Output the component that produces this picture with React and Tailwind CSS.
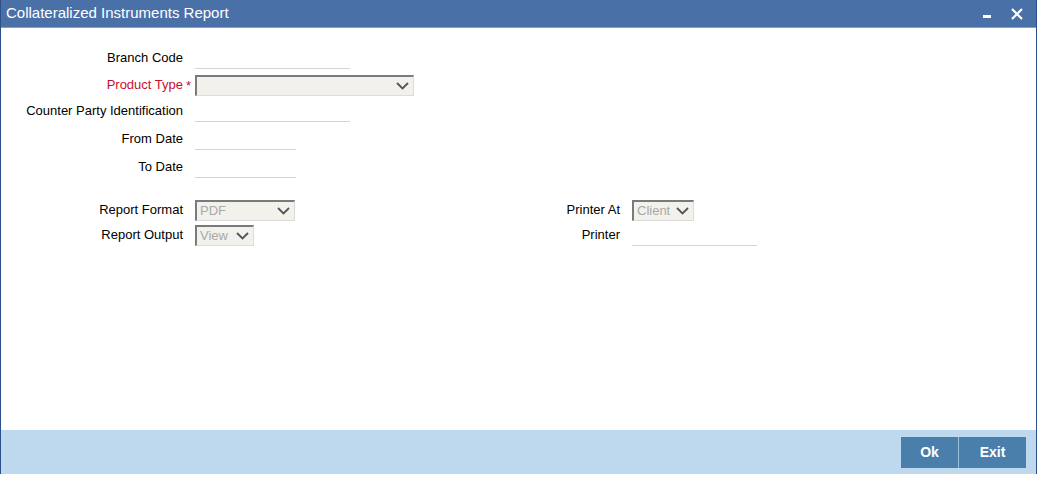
import React from 'react';

const Chevron = ({ className = '' }) => (
  <svg width="13" height="8" viewBox="0 0 13 8" className={className}>
    <path d="M1 1 L6.5 6.5 L12 1" fill="none" stroke="currentColor" strokeWidth="1.8" />
  </svg>
);

const Select = ({ width, value, disabled }) => (
  <div
    className={`${width} h-[21px] bg-[#f2f1ec] border-t-2 border-l-2 border-t-[#7a7a7a] border-l-[#7a7a7a] border-r border-b border-r-[#dcdcdc] border-b-[#dcdcdc] flex items-center justify-between pl-[3px] pr-[4px]`}
  >
    <span className={`text-[13px] ${disabled ? 'text-[#a9a9a9]' : 'text-black'}`}>{value}</span>
    <Chevron className="text-[#555]" />
  </div>
);

const TextField = ({ width }) => (
  <div className={`${width} h-[22px] border-b border-[#d4d4d4]`} />
);

const Row = ({ label, required, children, className = '', labelWidth = 'w-[182px]' }) => (
  <div className={`flex items-center h-[22px] ${className}`}>
    <div className={`${labelWidth} text-right text-[13px] ${required ? 'text-[#c8102e]' : 'text-black'}`}>
      {label}
    </div>
    <div className="w-[12px] text-[#c8102e] text-[13px] pl-[3px] leading-none">{required ? '*' : ''}</div>
    {children}
  </div>
);

export default function App() {
  return (
    <div className="w-[1038px] h-[483px] bg-white font-['Liberation_Sans',Arial,sans-serif] overflow-hidden">
      <div className="w-[1037px] h-[474px] flex flex-col border-l border-r border-[#2b4f88]">
        {/* Title bar */}
        <div className="h-[28px] bg-[#4a70a8] flex items-center justify-between pl-[5px] pr-[13px] border-b border-[#8ea3a8] shrink-0">
          <span className="text-white text-[15px]">Collateralized Instruments Report</span>
          <div className="flex items-center gap-[20px]">
            <div className="w-[8px] h-[3px] bg-white mt-[6px]" />
            <svg width="12" height="12" viewBox="0 0 12 12">
              <path d="M1 1 L11 11 M11 1 L1 11" stroke="white" strokeWidth="2.2" />
            </svg>
          </div>
        </div>

        {/* Body */}
        <div className="flex-1 bg-white pt-[19px]">
          <Row label="Branch Code">
            <TextField width="w-[155px]" />
          </Row>
          <Row label="Product Type" required className="mt-[5px]">
            <Select width="w-[219px]" value="" />
          </Row>
          <Row label="Counter Party Identification" className="mt-[4px]">
            <TextField width="w-[155px]" />
          </Row>
          <Row label="From Date" className="mt-[6px]">
            <TextField width="w-[101px]" />
          </Row>
          <Row label="To Date" className="mt-[6px]">
            <TextField width="w-[101px]" />
          </Row>

          <div className="flex mt-[21px]">
            <div className="flex flex-col gap-[3px] w-[437px]">
              <Row label="Report Format">
                <Select width="w-[100px]" value="PDF" disabled />
              </Row>
              <Row label="Report Output">
                <Select width="w-[59px]" value="View" disabled />
              </Row>
            </div>
            <div className="flex flex-col gap-[3px]">
              <Row label="Printer At">
                <Select width="w-[62px]" value="Client" disabled />
              </Row>
              <Row label="Printer">
                <TextField width="w-[125px]" />
              </Row>
            </div>
          </div>
        </div>

        {/* Footer */}
        <div className="h-[44px] bg-[#bed9ed] flex items-center justify-end pr-[10px] shrink-0">
          <div className="flex gap-[1px] bg-[#9cc1dd]">
            <button className="w-[57px] h-[31px] bg-[#4a7fab] text-white text-[14px] font-bold">Ok</button>
            <button className="w-[67px] h-[31px] bg-[#4a7fab] text-white text-[14px] font-bold">Exit</button>
          </div>
        </div>
      </div>
    </div>
  );
}
